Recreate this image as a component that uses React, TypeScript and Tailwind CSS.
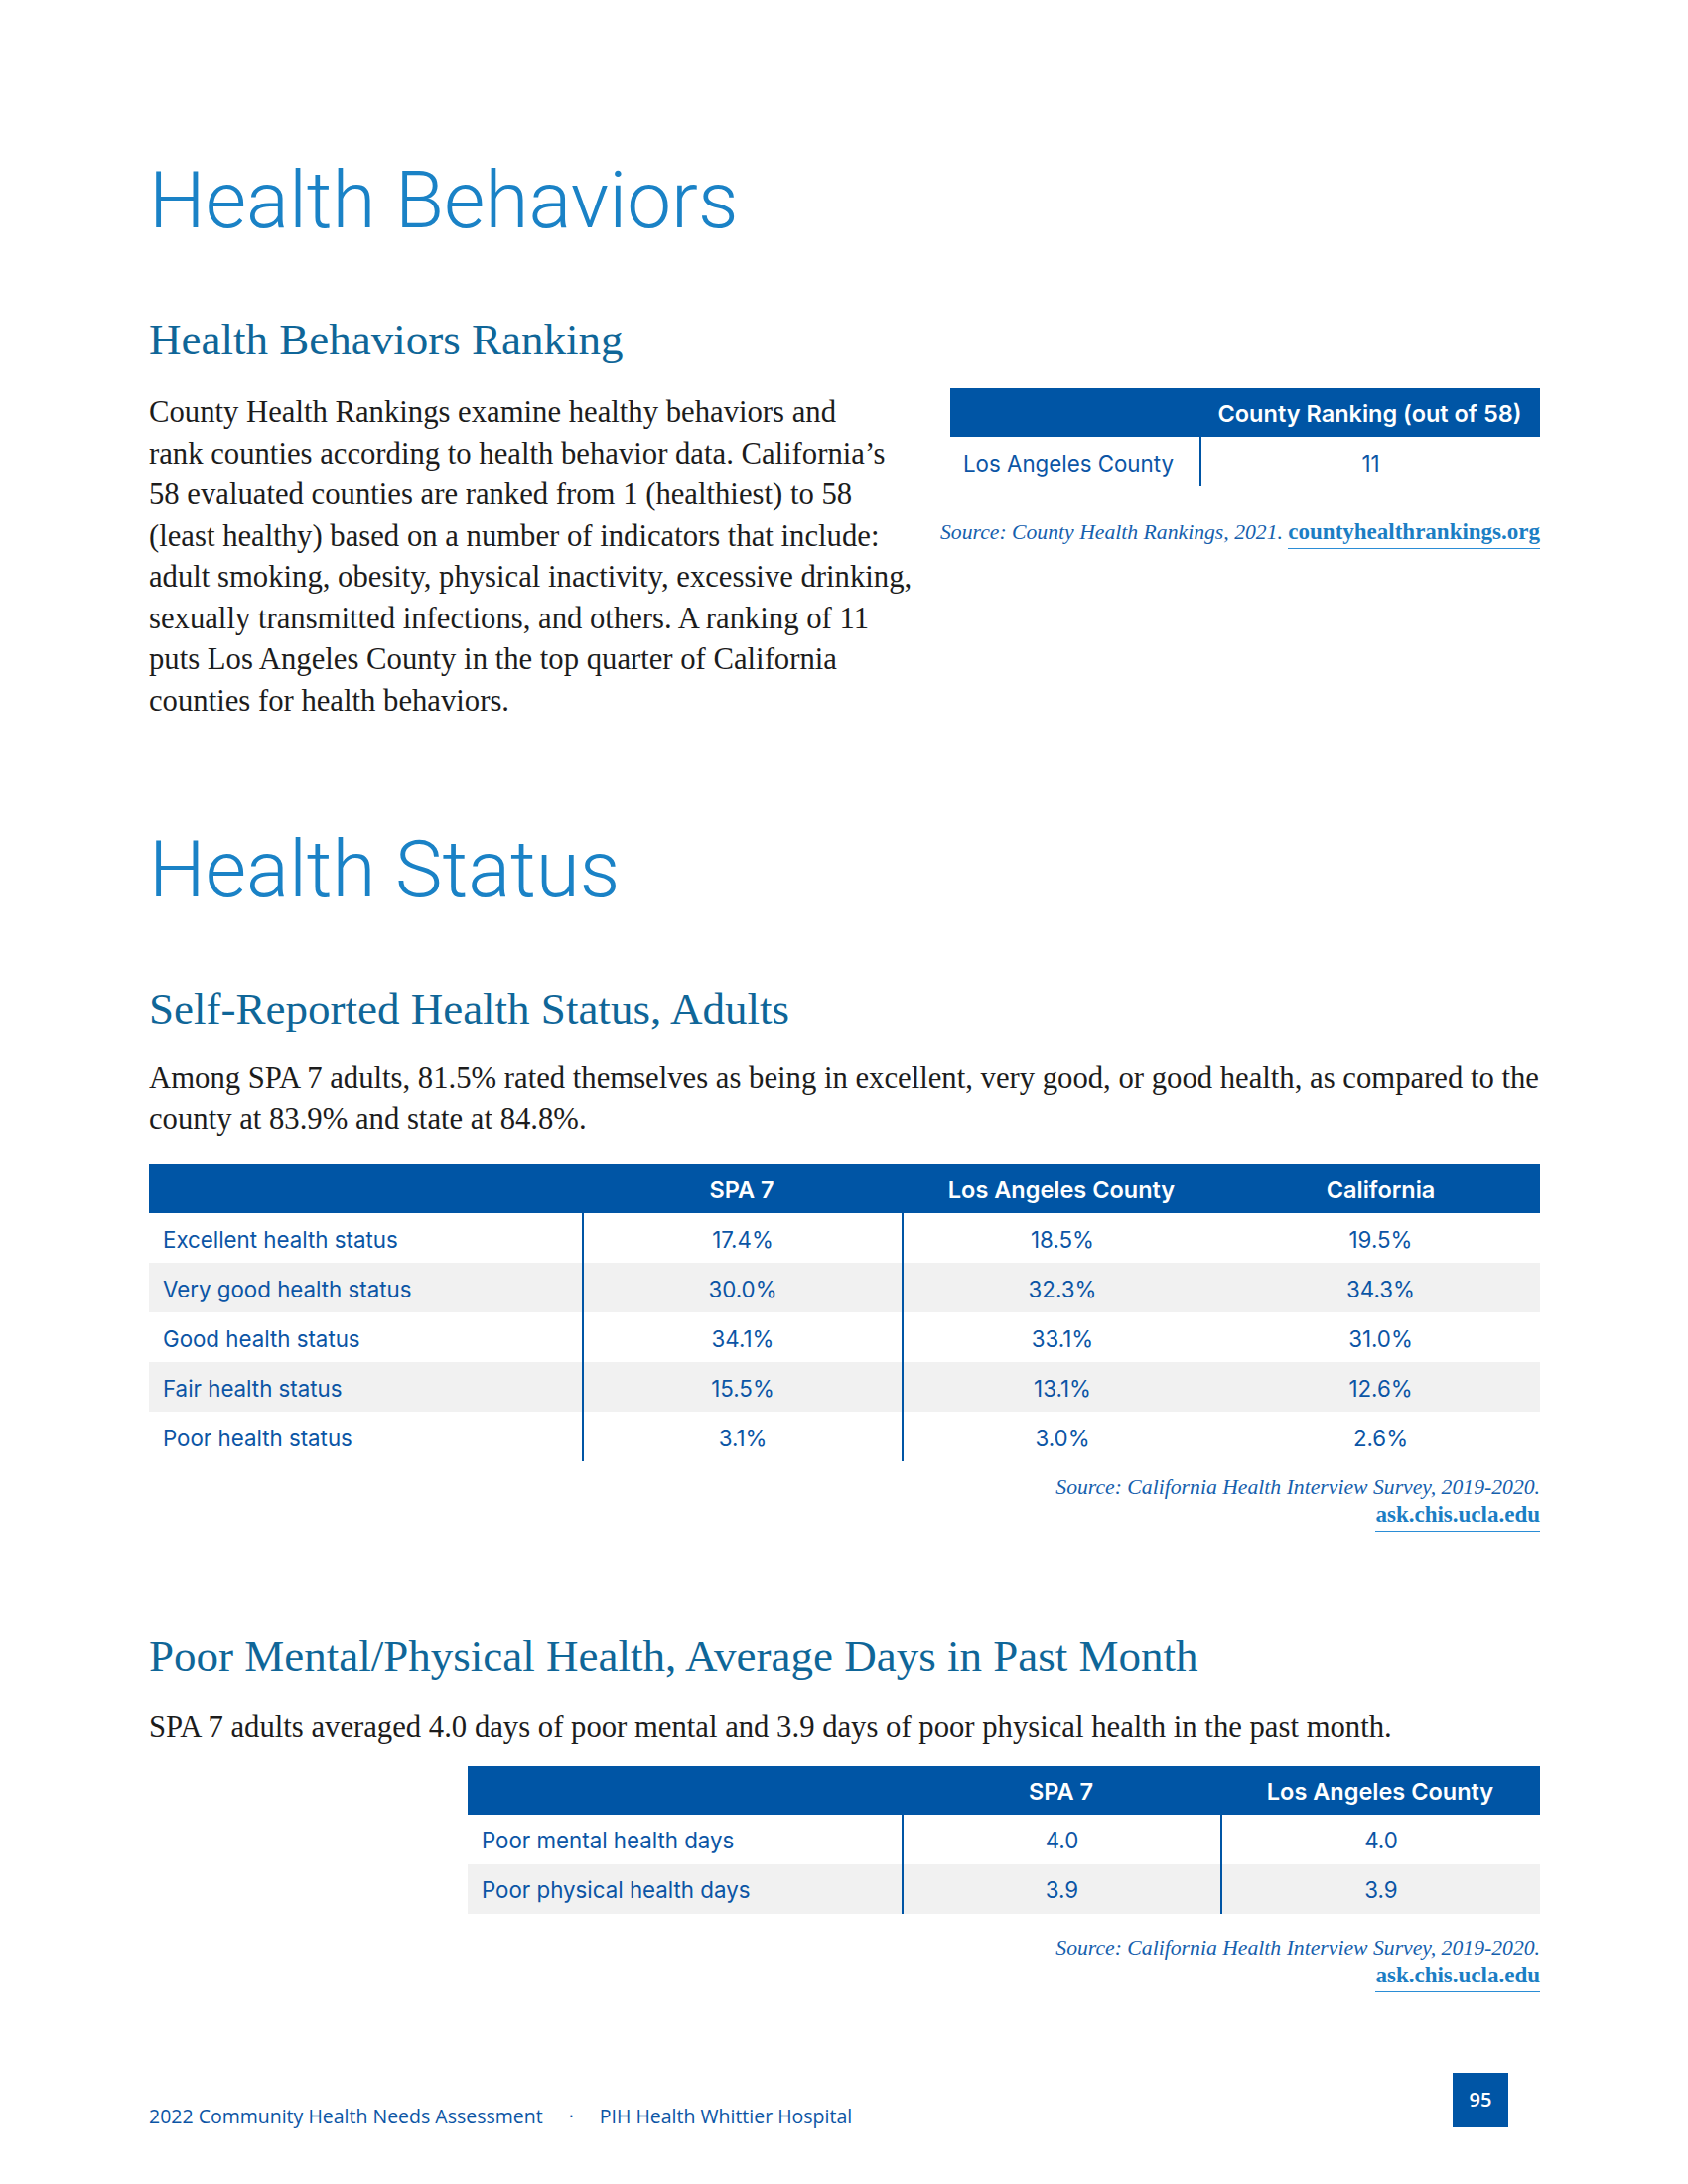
import React from 'react';

const sans = "font-['Inter','Roboto',sans-serif]";
const serif = "font-['Liberation_Serif','Times_New_Roman',serif]";

const healthRows = [
  { label: 'Excellent health status', spa: '17.4%', la: '18.5%', ca: '19.5%' },
  { label: 'Very good health status', spa: '30.0%', la: '32.3%', ca: '34.3%' },
  { label: 'Good health status', spa: '34.1%', la: '33.1%', ca: '31.0%' },
  { label: 'Fair health status', spa: '15.5%', la: '13.1%', ca: '12.6%' },
  { label: 'Poor health status', spa: '3.1%', la: '3.0%', ca: '2.6%' },
];

const daysRows = [
  { label: 'Poor mental health days', spa: '4.0', la: '4.0' },
  { label: 'Poor physical health days', spa: '3.9', la: '3.9' },
];

const SectionTitle = ({ children, className = '' }: { children: React.ReactNode; className?: string }) => (
  <h1 className={`font-['Roboto',sans-serif] text-[80px] leading-[80px] font-light text-[#1a82c6] ${className}`}>
    {children}
  </h1>
);

const SubTitle = ({ children, className = '' }: { children: React.ReactNode; className?: string }) => (
  <h2 className={`${serif} text-[45px] leading-[48px] text-[#0f6698] ${className}`}>{children}</h2>
);

const Link = ({ children }: { children: React.ReactNode }) => (
  <span className="not-italic font-bold text-[23px] text-[#1b7ec4] border-b-[1.5px] border-[#2b8dd6] pb-[4px]">{children}</span>
);

const ChisSource = ({ className = '' }: { className?: string }) => (
  <div className={`${serif} text-[21.7px] leading-[27px] text-right ${className}`}>
    <div className="italic text-[#1560ad]">Source: California Health Interview Survey, 2019-2020.</div>
    <div>
      <Link>ask.chis.ucla.edu</Link>
    </div>
  </div>
);

const head = 'h-[49px] pt-[3px] bg-[#0055a5] flex items-center justify-center text-white text-[23.5px] font-semibold';
const cell = 'h-[50px] pt-[3px] flex items-center text-[22.3px] text-[#0b55a5]';

export default function App() {
  return (
    <div className="w-[1700px] h-[2200px] bg-white pl-[150px] pr-[149px] pt-[162px]">
      <SectionTitle>Health Behaviors</SectionTitle>
      <SubTitle className="mt-[76px]">Health Behaviors Ranking</SubTitle>

      <div className="mt-[25px] flex justify-between items-start">
        <p className={`${serif} pt-[4px] text-[30.7px] leading-[41.5px] text-[#1c1c1c] whitespace-nowrap`}>
          County Health Rankings examine healthy behaviors and
          <br />
          rank counties according to health behavior data. California’s
          <br />
          58 evaluated counties are ranked from 1 (healthiest) to 58
          <br />
          (least healthy) based on a number of indicators that include:
          <br />
          adult smoking, obesity, physical inactivity, excessive drinking,
          <br />
          sexually transmitted infections, and others. A ranking of 11
          <br />
          puts Los Angeles County in the top quarter of California
          <br />
          counties for health behaviors.
        </p>

        <div className="w-[594px]">
          <div className={`${sans} grid grid-cols-[251px_1fr]`}>
            <div className="h-[49px] bg-[#0055a5]" />
            <div className={head}>County Ranking (out of 58)</div>
            <div className={`${cell} pl-[13px]`}>Los Angeles County</div>
            <div className={`${cell} justify-center border-l-2 border-[#0055a5]`}>11</div>
          </div>
          <div className={`${serif} -ml-[10px] mt-[32px] text-[21.7px] leading-[27px] text-right whitespace-nowrap`}>
            <span className="italic text-[#1560ad]">Source: County Health Rankings, 2021. </span>
            <Link>countyhealthrankings.org</Link>
          </div>
        </div>
      </div>

      <SectionTitle className="mt-[109px]">Health Status</SectionTitle>
      <SubTitle className="mt-[76px]">Self-Reported Health Status, Adults</SubTitle>
      <p className={`${serif} mt-[26px] text-[30.7px] leading-[41px] text-[#1c1c1c] whitespace-nowrap`}>
        Among SPA 7 adults, 81.5% rated themselves as being in excellent, very good, or good health, as compared to the
        <br />
        county at 83.9% and state at 84.8%.
      </p>

      <div className={`${sans} mt-[25px] grid grid-cols-[436px_322px_322px_1fr]`}>
        <div className="h-[49px] bg-[#0055a5]" />
        <div className={head}>SPA 7</div>
        <div className={head}>Los Angeles County</div>
        <div className={head}>California</div>
        {healthRows.map((r, i) => {
          const bg = i % 2 === 1 ? 'bg-[#f1f1f1]' : 'bg-white';
          return (
            <React.Fragment key={r.label}>
              <div className={`${cell} pl-[14px] ${bg}`}>{r.label}</div>
              <div className={`${cell} justify-center border-l-2 border-[#0055a5] ${bg}`}>{r.spa}</div>
              <div className={`${cell} justify-center border-l-2 border-[#0055a5] ${bg}`}>{r.la}</div>
              <div className={`${cell} justify-center ${bg}`}>{r.ca}</div>
            </React.Fragment>
          );
        })}
      </div>
      <ChisSource className="mt-[13px]" />

      <SubTitle className="mt-[104px]">Poor Mental/Physical Health, Average Days in Past Month</SubTitle>
      <p className={`${serif} mt-[28px] text-[30.7px] leading-[41.5px] text-[#1c1c1c] whitespace-nowrap`}>
        SPA 7 adults averaged 4.0 days of poor mental and 3.9 days of poor physical health in the past month.
      </p>

      <div className={`${sans} mt-[17px] ml-auto w-[1080px] grid grid-cols-[437px_321px_1fr]`}>
        <div className="h-[49px] bg-[#0055a5]" />
        <div className={head}>SPA 7</div>
        <div className={head}>Los Angeles County</div>
        {daysRows.map((r, i) => {
          const bg = i % 2 === 1 ? 'bg-[#f1f1f1]' : 'bg-white';
          return (
            <React.Fragment key={r.label}>
              <div className={`${cell} pl-[14px] ${bg}`}>{r.label}</div>
              <div className={`${cell} justify-center border-l-2 border-[#0055a5] ${bg}`}>{r.spa}</div>
              <div className={`${cell} justify-center border-l-2 border-[#0055a5] ${bg}`}>{r.la}</div>
            </React.Fragment>
          );
        })}
      </div>
      <ChisSource className="mt-[21px]" />

      <footer className="mt-[84px] flex justify-between items-start">
        <div className="mt-[32px] flex gap-[26px] font-['Open_Sans',sans-serif] text-[19.5px] leading-[24px] text-[#0b55a5]">
          <span>2022 Community Health Needs Assessment</span>
          <span>·</span>
          <span>PIH Health Whittier Hospital</span>
        </div>
        <div className="mr-[32px] w-[56px] h-[55px] bg-[#0055a5] flex items-center justify-center font-['Open_Sans',sans-serif] text-[20px] font-semibold text-white">
          95
        </div>
      </footer>
    </div>
  );
}
